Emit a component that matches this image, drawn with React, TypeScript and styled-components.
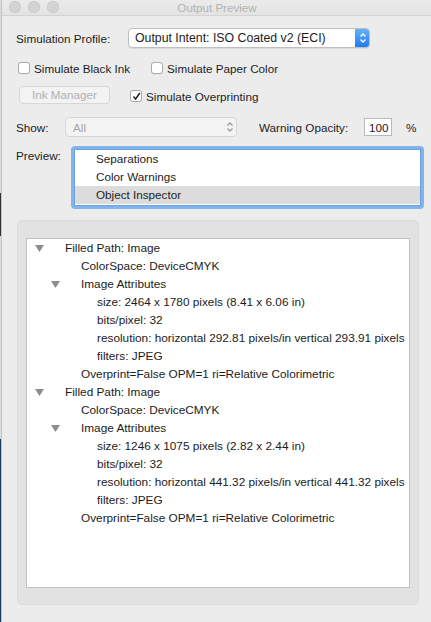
import React from "react";
import styled, { createGlobalStyle } from "styled-components";

const GlobalStyle = createGlobalStyle`
  html, body {
    margin: 0;
    padding: 0;
    background: #ececec;
  }
  body {
    font-family: "Liberation Sans", Arial, sans-serif;
    font-size: 11.7px;
    color: #1c1c1c;
    -webkit-font-smoothing: antialiased;
  }
`;

const Page = styled.div`
  display: flex;
  width: 431px;
  height: 622px;
  overflow: hidden;
`;

const Backdrop = styled.div`
  flex: 0 0 1px;
  background: linear-gradient(#dcdcdc 0 31%, #333 31% 38%, #dcdcdc 38% 70.5%, #163a60 70.5%);
`;

const Window = styled.div`
  flex: 1;
  display: flex;
  flex-direction: column;
  background: #ececec;
  border-left: 1px solid #c4c4c4;
  min-width: 0;
`;

const TitleBar = styled.div`
  position: relative;
  flex: 0 0 15px;
  display: flex;
  align-items: center;
  justify-content: center;
  background: linear-gradient(#ebebeb, #e3e3e3);
  border-bottom: 1px solid #d3d3d3;
`;

const Lights = styled.div`
  position: absolute;
  left: 7px;
  top: 1px;
  display: flex;
  gap: 7px;
`;

const Light = styled.span`
  width: 12px;
  height: 12px;
  border-radius: 50%;
  background: #d3d3d3;
  box-shadow: inset 0 0 0 0.5px #c4c4c4;
`;

const Title = styled.span`
  font-size: 11.6px;
  color: #b2b2b2;
  margin-left: 1px;
`;

const Content = styled.div`
  display: flex;
  flex-direction: column;
  padding: 0 0 0 14px;
`;

const Row = styled.div<{ $top: number; $height: number; $align?: string }>`
  display: flex;
  align-items: ${(p) => p.$align || "center"};
  margin-top: ${(p) => p.$top}px;
  height: ${(p) => p.$height}px;
`;

const Label = styled.span<{ $width?: number }>`
  flex: 0 0 ${(p) => (p.$width ? `${p.$width}px` : "auto")};
  white-space: nowrap;
`;

const Popup = styled.div<{ $width: number; $disabled?: boolean }>`
  position: relative;
  display: flex;
  align-items: center;
  box-sizing: border-box;
  width: ${(p) => p.$width}px;
  height: 20px;
  padding-left: ${(p) => (p.$disabled ? 7 : 6)}px;
  background: ${(p) => (p.$disabled ? "#f3f3f3" : "#fff")};
  border: 1px solid ${(p) => (p.$disabled ? "#d6d6d6" : "#bfbfbf")};
  border-radius: 4px;
  color: ${(p) => (p.$disabled ? "#a6a6a6" : "#1c1c1c")};
  font-size: ${(p) => (p.$disabled ? 11.7 : 12.3)}px;
  box-shadow: ${(p) => (p.$disabled ? "none" : "0 1px 0 rgba(0,0,0,0.08)")};
  overflow: hidden;
`;

const Stepper = styled.span<{ $blue?: boolean }>`
  position: absolute;
  right: -1px;
  top: -1px;
  bottom: -1px;
  width: 15px;
  display: flex;
  align-items: center;
  justify-content: center;
  border-radius: 0 4px 4px 0;
  background: ${(p) => (p.$blue ? "linear-gradient(#6cb3fa, #1b78ef)" : "transparent")};
  color: ${(p) => (p.$blue ? "#fff" : "#9a9a9a")};
`;

const CheckItem = styled.label<{ $width?: number; $shift?: number }>`
  display: flex;
  align-items: center;
  gap: 4px;
  flex: 0 0 ${(p) => (p.$width ? `${p.$width}px` : "auto")};
  margin-left: ${(p) => p.$shift || 0}px;
  white-space: nowrap;
`;

const Box = styled.span`
  display: flex;
  align-items: center;
  justify-content: center;
  box-sizing: border-box;
  width: 12px;
  height: 12px;
  background: #fff;
  border: 1px solid #a9a9a9;
  border-radius: 3px;
  box-shadow: 0 0.5px 0 rgba(0,0,0,0.06);
`;

const PushButton = styled.button`
  flex: 0 0 91px;
  height: 18px;
  margin: 0 20px 0 3px;
  padding: 0;
  font: inherit;
  color: #b0b0b0;
  background: #f3f3f3;
  border: 1px solid #d7d7d7;
  border-radius: 4px;
`;

const NumberField = styled.div`
  box-sizing: border-box;
  width: 28px;
  height: 18px;
  padding: 2px 0 0 4px;
  background: #fff;
  border: 1px solid #b9b9b9;
  line-height: 14px;
`;

const ListFrame = styled.div`
  box-sizing: border-box;
  width: 353px;
  height: 63px;
  padding: 3px;
  background: #82b4ec;
  border-radius: 4px;
`;

const List = styled.ul`
  box-sizing: border-box;
  height: 100%;
  margin: 0;
  padding: 0;
  list-style: none;
  background: #fff;
  border: 1px solid #6aa2e0;
`;

const ListItem = styled.li<{ $selected?: boolean }>`
  height: 18px;
  line-height: 17px;
  padding-left: 21px;
  background: ${(p) => (p.$selected ? "#dcdcdc" : "transparent")};
`;

const Group = styled.div`
  box-sizing: border-box;
  width: 402px;
  height: 385px;
  margin: 11px 0 0 1px;
  padding: 17px 8px 16px;
  background: #e2e2e2;
  border: 1px solid #dcdcdc;
  border-radius: 5px;
`;

const Tree = styled.div`
  box-sizing: border-box;
  height: 100%;
  background: #fff;
  border: 1px solid #c2c2c2;
  overflow: hidden;
  font-size: 11.8px;
`;

const TreeRow = styled.div<{ $level: number }>`
  display: flex;
  align-items: center;
  height: 18px;
  padding-left: ${(p) => 8 + p.$level * 16}px;
  white-space: nowrap;
`;

const Toggle = styled.span`
  flex: 0 0 30px;
  display: flex;
  align-items: center;
`;

function Chevrons() {
  return (
    <svg width="8" height="12" viewBox="0 0 8 12" fill="none" stroke="currentColor" strokeWidth="1.3">
      <path d="M1.5 4.5 L4 2 L6.5 4.5" />
      <path d="M1.5 7.5 L4 10 L6.5 7.5" />
    </svg>
  );
}

function Triangle() {
  return (
    <svg width="9" height="7" viewBox="0 0 9 7">
      <polygon points="0,0 9,0 4.5,7" fill="#8d8d8d" />
    </svg>
  );
}

function Check() {
  return (
    <svg width="9" height="9" viewBox="0 0 9 9" fill="none" stroke="#222" strokeWidth="1.5">
      <path d="M1.5 4.5 L3.6 7 L7.8 1" />
    </svg>
  );
}

type Node = { level: number; text: string; open?: boolean };

const imageNode = (size: string, res: string): Node[] => [
  { level: 0, text: "Filled Path: Image", open: true },
  { level: 1, text: "ColorSpace: DeviceCMYK" },
  { level: 1, text: "Image Attributes", open: true },
  { level: 2, text: `size: ${size}` },
  { level: 2, text: "bits/pixel: 32" },
  { level: 2, text: `resolution: ${res}` },
  { level: 2, text: "filters: JPEG" },
  { level: 1, text: "Overprint=False OPM=1 ri=Relative Colorimetric" },
];

const nodes: Node[] = [
  ...imageNode(
    "2464 x 1780 pixels (8.41 x 6.06 in)",
    "horizontal 292.81 pixels/in vertical 293.91 pixels"
  ),
  ...imageNode(
    "1246 x 1075 pixels (2.82 x 2.44 in)",
    "horizontal 441.32 pixels/in vertical 441.32 pixels"
  ),
];

export default function App() {
  return (
    <Page>
      <GlobalStyle />
      <Backdrop />
      <Window>
        <TitleBar>
          <Lights>
            <Light />
            <Light />
            <Light />
          </Lights>
          <Title>Output Preview</Title>
        </TitleBar>
        <Content>
          <Row $top={12} $height={20}>
            <Label $width={112}>Simulation Profile:</Label>
            <Popup $width={242}>
              Output Intent: ISO Coated v2 (ECI)
              <Stepper $blue>
                <Chevrons />
              </Stepper>
            </Popup>
          </Row>
          <Row $top={12} $height={16}>
            <CheckItem $width={133} $shift={2}>
              <Box />
              Simulate Black Ink
            </CheckItem>
            <CheckItem>
              <Box />
              Simulate Paper Color
            </CheckItem>
          </Row>
          <Row $top={9} $height={19}>
            <PushButton disabled>Ink Manager</PushButton>
            <CheckItem style={{ marginTop: 3 }}>
              <Box>
                <Check />
              </Box>
              Simulate Overprinting
            </CheckItem>
          </Row>
          <Row $top={13} $height={20}>
            <Label $width={49}>Show:</Label>
            <Popup $width={172} $disabled>
              All
              <Stepper>
                <Chevrons />
              </Stepper>
            </Popup>
            <Label $width={105} style={{ marginLeft: 22 }}>
              Warning Opacity:
            </Label>
            <NumberField>100</NumberField>
            <Label style={{ marginLeft: 14 }}>%</Label>
          </Row>
          <Row $top={9} $height={63} $align="flex-start">
            <Label $width={55} style={{ marginTop: 3 }}>
              Preview:
            </Label>
            <ListFrame>
              <List>
                <ListItem>Separations</ListItem>
                <ListItem>Color Warnings</ListItem>
                <ListItem $selected>Object Inspector</ListItem>
              </List>
            </ListFrame>
          </Row>
          <Group>
            <Tree>
              {nodes.map((n, i) => (
                <TreeRow key={i} $level={n.level}>
                  <Toggle>{n.open && <Triangle />}</Toggle>
                  {n.text}
                </TreeRow>
              ))}
            </Tree>
          </Group>
        </Content>
      </Window>
    </Page>
  );
}
